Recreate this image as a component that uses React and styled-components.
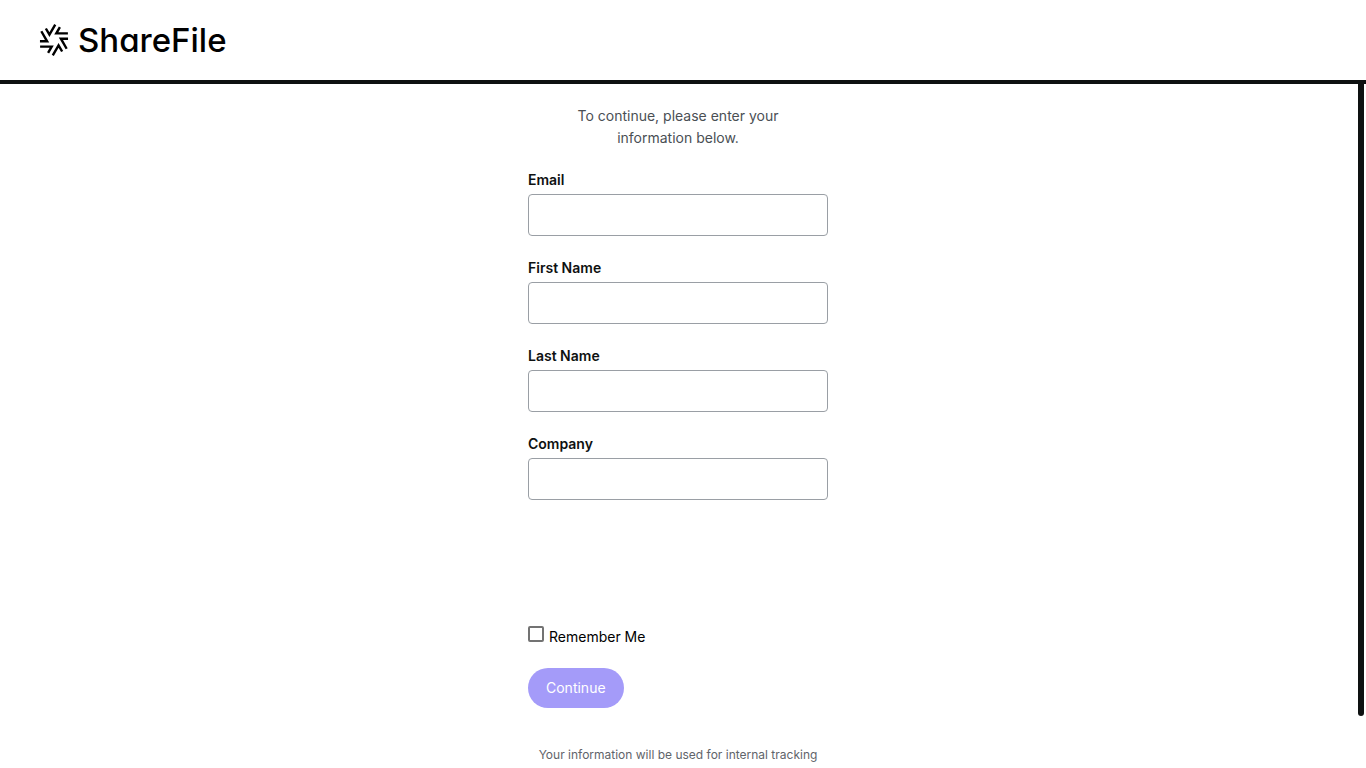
import React, { useState } from "react";
import styled, { createGlobalStyle } from "styled-components";

const GlobalStyle = createGlobalStyle`
  * {
    box-sizing: border-box;
  }

  body {
    margin: 0;
    background: #ffffff;
    color: #0e1111;
    font-family: Inter, "Liberation Sans", sans-serif;
    font-size: 14px;
    line-height: 22px;
  }
`;

const Page = styled.div`
  display: flex;
  flex-direction: column;
  height: 100vh;
`;

const Header = styled.header`
  display: flex;
  align-items: center;
  flex: none;
  height: 84px;
  padding: 0 38px;
  border-bottom: 4px solid #0e1111;
`;

const Brand = styled.div`
  display: flex;
  align-items: center;
  gap: 8px;
  color: #000000;
`;

const BrandName = styled.span`
  font-size: 33px;
  font-weight: 500;
  line-height: 40px;
  font-feature-settings: "cv11";
`;

const Body = styled.div`
  display: flex;
  flex: 1;
  min-height: 0;
`;

const Content = styled.main`
  flex: 1;
  min-width: 0;
  overflow: hidden;
`;

const ScrollTrack = styled.div`
  flex: none;
  width: 10px;
  padding: 0 2px;
`;

const ScrollThumb = styled.div`
  height: 92.4%;
  border-radius: 0 0 3px 3px;
  background: #0e1111;
`;

const Form = styled.form`
  width: 300px;
  margin: 0 auto;
  padding-top: 21px;
`;

const Intro = styled.p`
  margin: 0 0 20px;
  padding: 0 40px;
  color: #4a4f54;
  text-align: center;
`;

const Field = styled.div`
  display: flex;
  flex-direction: column;
  gap: 3px;
  margin-bottom: 21px;
`;

const Label = styled.label`
  font-weight: 600;
`;

const Input = styled.input`
  width: 100%;
  height: 42px;
  padding: 8px 12px;
  border: 1px solid #9a9fa5;
  border-radius: 4px;
  background: #ffffff;
  color: inherit;
  font: inherit;
`;

const Remember = styled.div`
  display: flex;
  gap: 5px;
  margin-top: 126px;
`;

const Checkbox = styled.input`
  appearance: none;
  flex: none;
  width: 16px;
  height: 16px;
  margin: 0;
  border: 2px solid #737373;
  border-radius: 2px;
  background: #ffffff;

  &:checked {
    background: #737373;
  }
`;

const RememberLabel = styled.label`
  color: #000000;
`;

const Button = styled.button`
  display: block;
  height: 40px;
  margin-top: 20px;
  padding: 0 18px;
  border: none;
  border-radius: 20px;
  background: #a49bf9;
  color: #ffffff;
  font: inherit;
`;

const Note = styled.p`
  margin: 38px 0 0;
  color: #5f646a;
  font-size: 12px;
  line-height: 18px;
  text-align: center;
`;

const fields = [
  { name: "email", label: "Email", type: "email" },
  { name: "firstName", label: "First Name", type: "text" },
  { name: "lastName", label: "Last Name", type: "text" },
  { name: "company", label: "Company", type: "text" },
];

const BurstIcon = () => (
  <svg width="32" height="34" viewBox="-16 -17 32 34" fill="none" aria-hidden="true">
    {[0, 60, 120, 180, 240, 300].map((angle) => (
      <path
        key={angle}
        d="M13.9 -6.6H2.3L5.9 -12.8"
        transform={`rotate(${angle})`}
        stroke="currentColor"
        strokeWidth="2.4"
      />
    ))}
  </svg>
);

const App = () => {
  const [values, setValues] = useState({});
  const [remember, setRemember] = useState(false);

  const handleChange = (e) => {
    setValues({ ...values, [e.target.name]: e.target.value });
  };

  return (
    <Page>
      <GlobalStyle />
      <Header>
        <Brand>
          <BurstIcon />
          <BrandName>ShareFile</BrandName>
        </Brand>
      </Header>
      <Body>
        <Content>
          <Form onSubmit={(e) => e.preventDefault()}>
            <Intro>To continue, please enter your information below.</Intro>
            {fields.map(({ name, label, type }) => (
              <Field key={name}>
                <Label htmlFor={name}>{label}</Label>
                <Input
                  id={name}
                  name={name}
                  type={type}
                  value={values[name] || ""}
                  onChange={handleChange}
                />
              </Field>
            ))}
            <Remember>
              <Checkbox
                id="remember"
                type="checkbox"
                checked={remember}
                onChange={(e) => setRemember(e.target.checked)}
              />
              <RememberLabel htmlFor="remember">Remember Me</RememberLabel>
            </Remember>
            <Button type="submit">Continue</Button>
            <Note>Your information will be used for internal tracking</Note>
          </Form>
        </Content>
        <ScrollTrack>
          <ScrollThumb />
        </ScrollTrack>
      </Body>
    </Page>
  );
};

export default App;
